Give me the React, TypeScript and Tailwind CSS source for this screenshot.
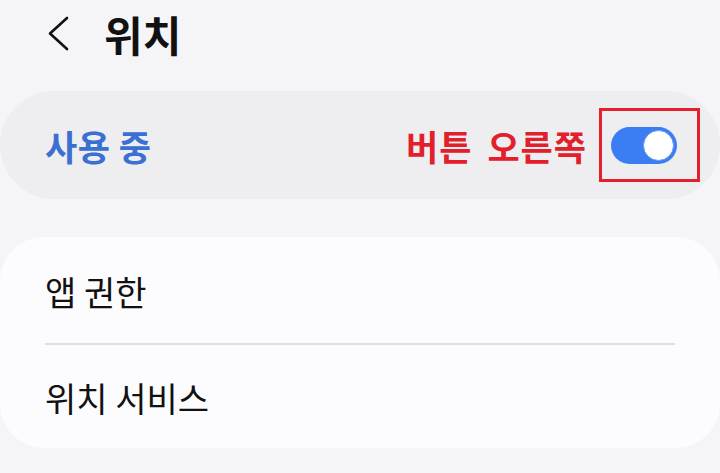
import React, { useState } from "react";

const font = { fontFamily: '"Noto Sans CJK KR", "Noto Sans", sans-serif' };

const Toggle = ({ on, onChange }: { on: boolean; onChange: () => void }) => (
  <button
    type="button"
    onClick={onChange}
    className={`flex items-center w-[66px] h-[37px] rounded-full p-[3px] ${
      on ? "bg-[#3b7df3] justify-end" : "bg-[#b9b9bf] justify-start"
    }`}
  >
    <span className="block w-[31px] h-[31px] rounded-full bg-white border border-[#6b98ee]" />
  </button>
);

const App = () => {
  const [enabled, setEnabled] = useState(true);

  return (
    <div className="w-[720px] h-[473px] overflow-hidden bg-[#f5f5f7]" style={font}>
      {/* header */}
      <div className="flex items-center h-[66px] pl-[47px] pt-[2px]">
        <svg width="24" height="36" viewBox="0 0 24 36" fill="none">
          <path
            d="M20 2 L3 17.5 L20 33"
            stroke="#111"
            strokeWidth="2.6"
            strokeLinecap="round"
            strokeLinejoin="round"
          />
        </svg>
        <h1 className="ml-[33px] text-[42px] font-bold text-[#111] leading-none">위치</h1>
      </div>

      {/* master switch */}
      <div className="mt-[25px] h-[108px] rounded-full bg-[#eeeef1] flex items-center pl-[45px] pr-[20px]">
        <span className="text-[35px] font-bold text-[#3b6fd2] leading-none tracking-[0.5px]">
          {enabled ? "사용 중" : "사용 안 함"}
        </span>
        <span className="ml-auto text-[35px] font-bold text-[#e2202b] leading-none tracking-[1px] [word-spacing:6px]">
          버튼 오른쪽
        </span>
        <div className="ml-[12px] w-[101px] h-[74px] border-[3px] border-[#e3202b] flex items-center pl-[9px]">
          <Toggle on={enabled} onChange={() => setEnabled(!enabled)} />
        </div>
      </div>

      {/* options */}
      <div className="mt-[38px] h-[211px] rounded-[44px] bg-[#fcfcfe] flex flex-col">
        <div className="h-[106px] flex items-center pl-[45px] pt-[4px]">
          <span className="text-[34px] text-[#111] leading-none">앱 권한</span>
        </div>
        <div className="mx-[45px] h-[2px] bg-[#e0e0e4]" />
        <div className="flex-1 flex items-center pl-[45px] pt-[2px]">
          <span className="text-[34px] text-[#111] leading-none">위치 서비스</span>
        </div>
      </div>
    </div>
  );
};

export default App;
